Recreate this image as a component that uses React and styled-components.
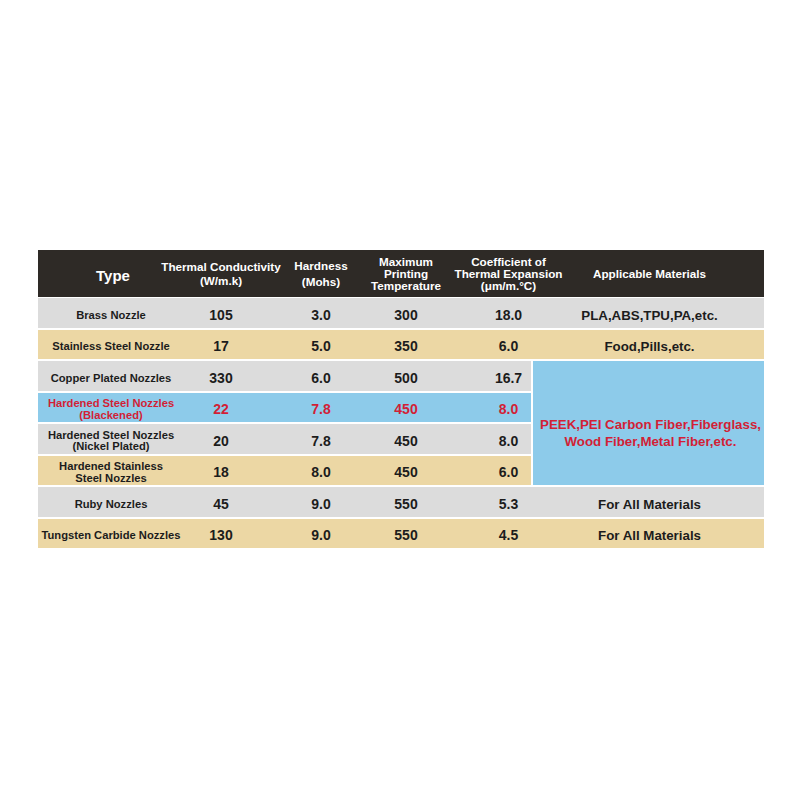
import React from 'react';
import styled, { createGlobalStyle } from 'styled-components';

const GlobalStyle = createGlobalStyle`
  body {
    margin: 0;
    background: #ffffff;
    font-family: "Liberation Sans", Arial, sans-serif;
  }
`;

// track widths and how far the text centre sits from the track centre
const columns = [
  { width: 128, shift: 9 },
  { width: 105, shift: 2.5 },
  { width: 92, shift: 4 },
  { width: 94, shift: -4 },
  { width: 74, shift: 14.5 },
  { width: 233, shift: 2 },
];

const template = columns.map((c) => `${c.width}px`).join(' ');
const shortTemplate = columns.slice(0, 5).map((c) => `${c.width}px`).join(' ');

const GREY = '#dcdcdc';
const TAN = '#ecd7a4';
const BLUE = '#8dcbea';
const RED = '#d21f36';

const Page = styled.div`
  padding: 250px 0 0 38px;
`;

const Table = styled.div`
  width: 726px;
  display: flex;
  flex-direction: column;
  gap: 2px;
`;

const HeaderRow = styled.div`
  display: grid;
  grid-template-columns: ${template};
  height: 47px;
  margin-bottom: -1px;
  background: #2e2a26;
`;

const HeaderCell = styled.div`
  display: flex;
  align-items: center;
  justify-content: center;
  padding-left: ${(p) => Math.max(0, p.$shift * 2)}px;
  padding-right: ${(p) => Math.max(0, -p.$shift * 2)}px;
  padding-top: ${(p) => (p.$big ? 4 : 0)}px;
  color: #ffffff;
  font-weight: bold;
  font-size: ${(p) => (p.$big ? 15 : 11.7)}px;
  line-height: ${(p) => p.$lh || 12}px;
  text-align: center;
  white-space: nowrap;
`;

const Row = styled.div`
  display: grid;
  grid-template-columns: ${(p) => (p.$short ? shortTemplate : template)};
  height: 29.5px;
  background: ${(p) => p.$bg};
  color: ${(p) => (p.$red ? RED : '#1c1c1c')};
`;

const Group = styled.div`
  display: flex;
  gap: 2px;
`;

const Stack = styled.div`
  display: flex;
  flex-direction: column;
  gap: 2px;
`;

const Cell = styled.div`
  display: flex;
  align-items: center;
  justify-content: center;
  padding-top: 5px;
  padding-left: ${(p) => Math.max(0, p.$shift * 2)}px;
  padding-right: ${(p) => Math.max(0, -p.$shift * 2)}px;
  font-weight: bold;
  font-size: ${(p) => p.$size}px;
  line-height: 11.4px;
  text-align: center;
  white-space: nowrap;
`;

const MergedCell = styled.div`
  flex: 1;
  display: flex;
  align-items: center;
  justify-content: center;
  padding: 22px 0 0 4px;
  background: ${BLUE};
  color: ${RED};
  font-weight: bold;
  font-size: 13.3px;
  line-height: 16.6px;
  text-align: center;
  white-space: nowrap;
`;

const headers = [
  { text: ['Type'], big: true },
  { text: ['Thermal Conductivity', '(W/m.k)'], lh: 13.7 },
  { text: ['Hardness', '(Mohs)'], lh: 15.4 },
  { text: ['Maximum', 'Printing', 'Temperature'], lh: 12 },
  { text: ['Coefficient of', 'Thermal Expansion', '(μm/m.°C)'], lh: 12 },
  { text: ['Applicable Materials'] },
];

const rows = [
  { name: ['Brass Nozzle'], vals: ['105', '3.0', '300', '18.0'], use: 'PLA,ABS,TPU,PA,etc.', bg: GREY },
  { name: ['Stainless Steel Nozzle'], vals: ['17', '5.0', '350', '6.0'], use: 'Food,Pills,etc.', bg: TAN },
  { name: ['Copper Plated Nozzles'], vals: ['330', '6.0', '500', '16.7'], bg: GREY },
  { name: ['Hardened Steel Nozzles', '(Blackened)'], vals: ['22', '7.8', '450', '8.0'], bg: BLUE, red: true },
  { name: ['Hardened Steel Nozzles', '(Nickel Plated)'], vals: ['20', '7.8', '450', '8.0'], bg: GREY },
  { name: ['Hardened Stainless', 'Steel Nozzles'], vals: ['18', '8.0', '450', '6.0'], bg: TAN },
  { name: ['Ruby Nozzles'], vals: ['45', '9.0', '550', '5.3'], use: 'For All Materials', bg: GREY },
  { name: ['Tungsten Carbide Nozzles'], vals: ['130', '9.0', '550', '4.5'], use: 'For All Materials', bg: TAN },
];

const Lines = ({ lines }) => (
  <div>
    {lines.map((l, i) => (
      <React.Fragment key={i}>
        {i > 0 && <br />}
        {l}
      </React.Fragment>
    ))}
  </div>
);

const DataRow = ({ row }) => (
  <Row $bg={row.bg} $red={row.red} $short={!row.use}>
    <Cell $shift={columns[0].shift} $size={11.2}>
      <Lines lines={row.name} />
    </Cell>
    {row.vals.map((v, i) => (
      <Cell key={i} $shift={columns[i + 1].shift} $size={14}>
        {v}
      </Cell>
    ))}
    {row.use && (
      <Cell $shift={columns[5].shift} $size={13.3}>
        {row.use}
      </Cell>
    )}
  </Row>
);

export default function App() {
  const grouped = rows.slice(2, 6);
  return (
    <Page>
      <GlobalStyle />
      <Table>
        <HeaderRow>
          {headers.map((h, i) => (
            <HeaderCell key={i} $shift={i === 0 ? 11 : columns[i].shift} $big={h.big} $lh={h.lh}>
              <Lines lines={h.text} />
            </HeaderCell>
          ))}
        </HeaderRow>
        {rows.slice(0, 2).map((r, i) => (
          <DataRow key={i} row={r} />
        ))}
        <Group>
          <Stack>
            {grouped.map((r, i) => (
              <DataRow key={i} row={r} />
            ))}
          </Stack>
          <MergedCell>
            <Lines lines={['PEEK,PEI Carbon Fiber,Fiberglass,', 'Wood Fiber,Metal Fiber,etc.']} />
          </MergedCell>
        </Group>
        {rows.slice(6).map((r, i) => (
          <DataRow key={i} row={r} />
        ))}
      </Table>
    </Page>
  );
}
